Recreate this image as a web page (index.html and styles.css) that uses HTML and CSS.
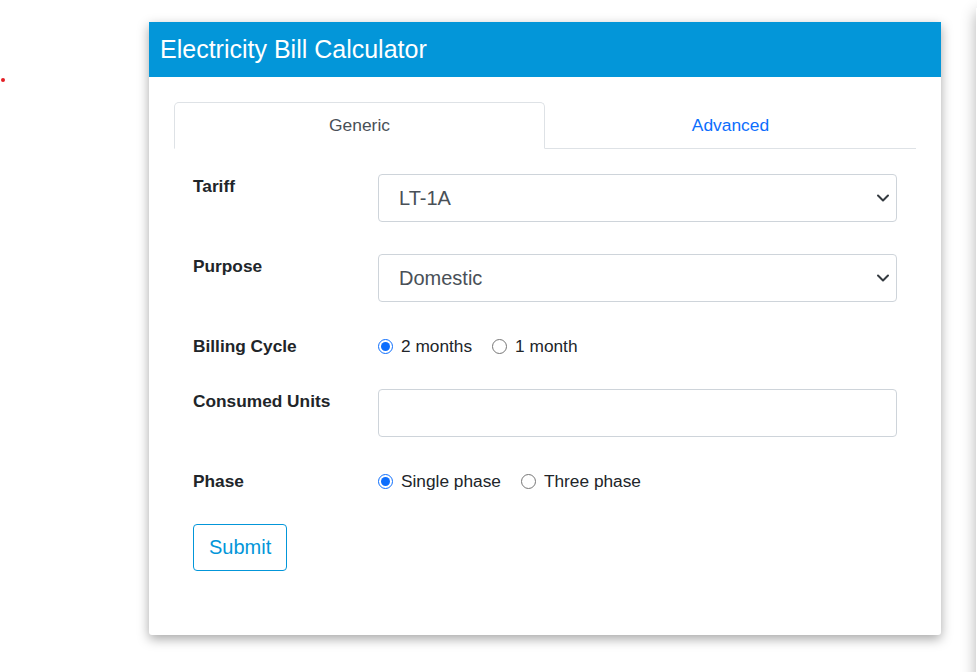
FILE: index.html
```html
<!DOCTYPE html>
<html>
<head>
<meta charset="utf-8">
<link rel="stylesheet" href="styles.css">
</head>
<body>
<span class="dot"></span>
<div class="side-card"></div>
<div class="card">
  <div class="card-header">Electricity Bill Calculator</div>
  <div class="card-body">
    <div class="tabs">
      <div class="tab active">Generic</div>
      <div class="tab link">Advanced</div>
    </div>
    <form class="tab-content">
      <div class="row">
        <label class="lbl">Tariff</label>
        <div class="select-wrap">
          <select class="control"><option>LT-1A</option></select>
          <svg class="chev" width="14" height="10" viewBox="0 0 14 10"><path d="M2 2.5 L7 7.5 L12 2.5" fill="none" stroke="#343a40" stroke-width="2" stroke-linecap="round" stroke-linejoin="round"/></svg>
        </div>
      </div>
      <div class="row">
        <label class="lbl">Purpose</label>
        <div class="select-wrap">
          <select class="control"><option>Domestic</option></select>
          <svg class="chev" width="14" height="10" viewBox="0 0 14 10"><path d="M2 2.5 L7 7.5 L12 2.5" fill="none" stroke="#343a40" stroke-width="2" stroke-linecap="round" stroke-linejoin="round"/></svg>
        </div>
      </div>
      <div class="row radio-row">
        <label class="lbl">Billing Cycle</label>
        <div class="options">
          <label class="opt"><input type="radio" name="cycle" checked>2 months</label>
          <label class="opt"><input type="radio" name="cycle">1 month</label>
        </div>
      </div>
      <div class="row">
        <label class="lbl">Consumed Units</label>
        <input class="control" type="text">
      </div>
      <div class="row radio-row">
        <label class="lbl">Phase</label>
        <div class="options">
          <label class="opt"><input type="radio" name="phase" checked>Single phase</label>
          <label class="opt"><input type="radio" name="phase">Three phase</label>
        </div>
      </div>
      <button type="button" class="btn">Submit</button>
    </form>
  </div>
</div>
</body>
</html>
```

FILE: styles.css
```css
html, body {
  margin: 0;
  padding: 0;
  background: #fff;
  overflow: hidden;
  height: 672px;
}
body {
  font-family: "Liberation Sans", Arial, sans-serif;
  color: #212529;
  position: relative;
}
.dot {
  position: absolute;
  left: 1px;
  top: 78px;
  width: 4px;
  height: 4px;
  border-radius: 50%;
  background: #e31e24;
}
.side-card {
  position: absolute;
  left: 976px;
  top: 8px;
  width: 600px;
  height: 700px;
  background: #fff;
  box-shadow: 0 4px 14px rgba(0,0,0,0.3);
}
.card {
  margin: 22px 0 0 149px;
  width: 792px;
  background: #fff;
  box-shadow: 0 4px 12px rgba(0,0,0,0.35);
  border-radius: 0 0 3px 3px;
}
.card-header {
  height: 55px;
  background: #0396d9;
  color: #fff;
  font-size: 25px;
  display: flex;
  align-items: center;
  padding: 0 11px;
}
.card-body {
  padding: 25px 25px 64px;
}
.tabs {
  display: flex;
  border-bottom: 1px solid #dee2e6;
}
.tab {
  flex: 1;
  height: 45px;
  display: flex;
  align-items: center;
  justify-content: center;
  font-size: 17.4px;
  border: 1px solid transparent;
  border-radius: 5px 5px 0 0;
  margin-bottom: -1px;
}
.tab.active {
  color: #495057;
  border-color: #dee2e6 #dee2e6 #fff;
  background: #fff;
}
.tab.link {
  color: #0d6efd;
}
.tab-content {
  padding: 25px 19px 0;
  margin: 0;
}
.row {
  display: flex;
  align-items: flex-start;
  margin-bottom: 32px;
}
.radio-row {
  margin-bottom: 31px;
}
.lbl {
  width: 185px;
  flex: none;
  font-weight: bold;
  font-size: 17.3px;
  line-height: 24px;
}
.select-wrap {
  flex: 1;
  position: relative;
  display: flex;
}
.control {
  flex: 1;
  box-sizing: border-box;
  height: 48px;
  border: 1px solid #ced4da;
  border-radius: 4px;
  background: #fff;
  color: #495057;
  font-family: "Liberation Sans", Arial, sans-serif;
  font-size: 20px;
  padding: 0 20px;
  appearance: none;
  -webkit-appearance: none;
  outline: none;
  margin: 0;
}
.chev {
  position: absolute;
  right: 7px;
  top: 19px;
}
.options {
  display: flex;
  align-items: center;
  height: 24px;
  font-size: 17.3px;
}
.opt {
  display: flex;
  align-items: center;
  margin-right: 20px;
  color: #212529;
}
.opt input {
  width: 15px;
  height: 15px;
  margin: 0 8px 0 0;
  accent-color: #0d6efd;
}
.btn {
  display: block;
  height: 47px;
  padding: 0 15px;
  font-family: "Liberation Sans", Arial, sans-serif;
  font-size: 20px;
  color: #0396d9;
  background: #fff;
  border: 1px solid #0396d9;
  border-radius: 4px;
}
```
